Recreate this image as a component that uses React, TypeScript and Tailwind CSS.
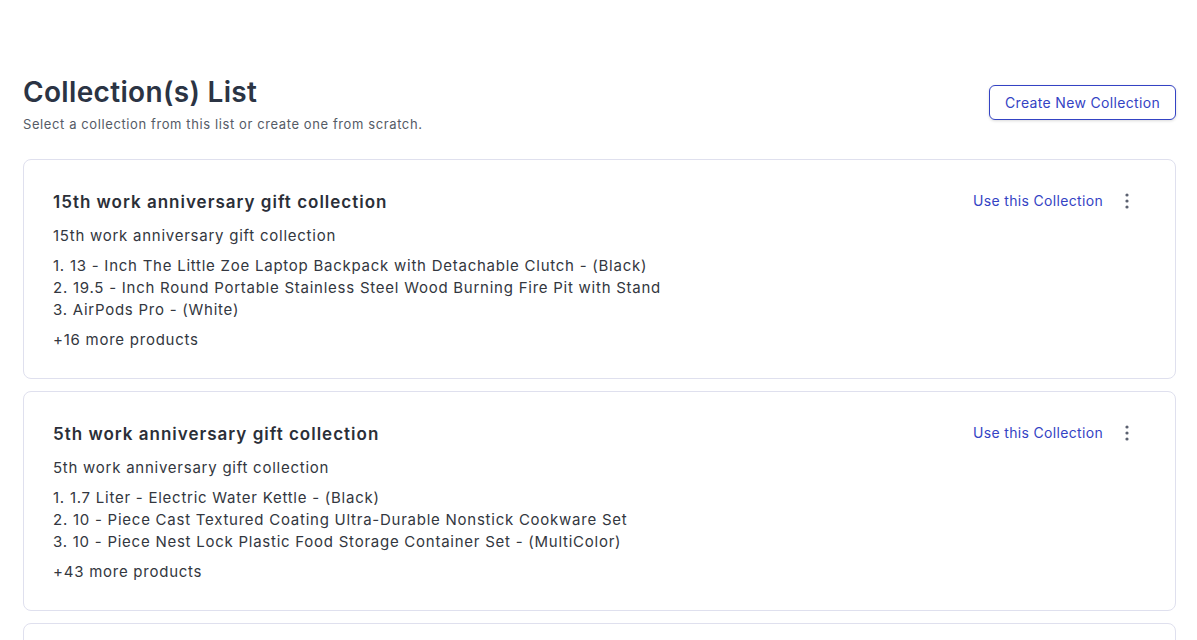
const collections = [
  {
    name: "15th work anniversary gift collection",
    description: "15th work anniversary gift collection",
    items: [
      "13 - Inch The Little Zoe Laptop Backpack with Detachable Clutch - (Black)",
      "19.5 - Inch Round Portable Stainless Steel Wood Burning Fire Pit with Stand",
      "AirPods Pro - (White)",
    ],
    more: 16,
  },
  {
    name: "5th work anniversary gift collection",
    description: "5th work anniversary gift collection",
    items: [
      "1.7 Liter - Electric Water Kettle - (Black)",
      "10 - Piece Cast Textured Coating Ultra-Durable Nonstick Cookware Set",
      "10 - Piece Nest Lock Plastic Food Storage Container Set - (MultiColor)",
    ],
    more: 43,
  },
  {
    name: "10th work anniversary gift collection",
    description: "10th work anniversary gift collection",
    items: ["Bluetooth Speaker - (Black)"],
    more: 12,
  },
];

const Kebab = () => (
  <svg width="4" height="16" viewBox="0 0 4 16" className="text-[#5b6170]">
    <circle cx="2" cy="2" r="1.6" fill="currentColor" />
    <circle cx="2" cy="8" r="1.6" fill="currentColor" />
    <circle cx="2" cy="14" r="1.6" fill="currentColor" />
  </svg>
);

const App = () => {
  return (
    <div
      className="min-h-screen bg-white pl-[23px] pr-[21px] pt-[76px]"
      style={{ fontFamily: "Inter, 'Noto Sans', sans-serif" }}
    >
      <div className="flex items-start justify-between">
        <div>
          <h1 className="text-[28px] font-semibold leading-[32px] tracking-[0.33px] text-[#2b3444]">
            Collection(s) List
          </h1>
          <p className="mt-[8px] text-[13px] leading-[16px] tracking-[0.6px] text-[#555b66]">
            Select a collection from this list or create one from scratch.
          </p>
        </div>
        <button className="mt-[9px] h-[35px] rounded-[6px] border border-[#3443c4] bg-white px-[15px] text-[14px] tracking-[0.33px] text-[#3443c4] shadow-[0_1px_3px_rgba(0,0,0,0.15)]">
          Create New Collection
        </button>
      </div>

      <div className="mt-[27px] flex flex-col gap-[12px]">
        {collections.map((c) => (
          <div
            key={c.name}
            className="rounded-[8px] border border-[#dfe0ee] bg-white px-[29px] pb-[27px] pt-[30px]"
          >
            <div className="flex items-start justify-between">
              <h2 className="text-[17px] font-semibold leading-[24px] tracking-[1px] text-[#2b2f38]">
                {c.name}
              </h2>
              <div className="flex items-center gap-[22px] pr-[17px] pt-[1px]">
                <button className="text-[14px] leading-[20px] tracking-[0.33px] text-[#3443c4]">
                  Use this Collection
                </button>
                <Kebab />
              </div>
            </div>
            <div className="text-[15px] leading-[22px] tracking-[0.75px] text-[#333740]">
              <p className="mt-[11px]">{c.description}</p>
              <ol className="mt-[8px]">
                {c.items.map((item, i) => (
                  <li key={item}>
                    {i + 1}. {item}
                  </li>
                ))}
              </ol>
              <p className="mt-[8px]">+{c.more} more products</p>
            </div>
          </div>
        ))}
      </div>
    </div>
  );
};

export default App;
